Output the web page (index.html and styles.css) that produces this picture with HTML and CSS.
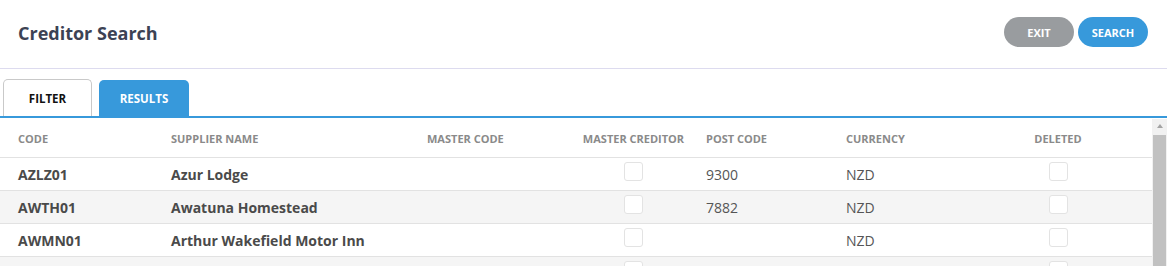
FILE: index.html
```html
<!DOCTYPE html>
<html lang="en">
<head>
    <meta charset="UTF-8">
    <title>Creditor Search</title>
    <link rel="stylesheet" href="styles.css">
</head>
<body>
    <div class="page-header">
        <h1>Creditor Search</h1>
        <div class="actions">
            <button class="btn btn-exit">EXIT</button>
            <button class="btn btn-search">SEARCH</button>
        </div>
    </div>

    <div class="tabs">
        <div class="tab">FILTER</div>
        <div class="tab tab-active">RESULTS</div>
    </div>

    <div class="results">
        <div class="grid">
            <div class="row head">
                <div class="cell">CODE</div>
                <div class="cell">SUPPLIER NAME</div>
                <div class="cell">MASTER CODE</div>
                <div class="cell center">MASTER CREDITOR</div>
                <div class="cell">POST CODE</div>
                <div class="cell">CURRENCY</div>
                <div class="cell center last">DELETED</div>
            </div>
            <div class="row">
                <div class="cell strong">AZLZ01</div>
                <div class="cell strong">Azur Lodge</div>
                <div class="cell"></div>
                <div class="cell center"><span class="check"></span></div>
                <div class="cell">9300</div>
                <div class="cell">NZD</div>
                <div class="cell center last"><span class="check"></span></div>
            </div>
            <div class="row">
                <div class="cell strong">AWTH01</div>
                <div class="cell strong">Awatuna Homestead</div>
                <div class="cell"></div>
                <div class="cell center"><span class="check"></span></div>
                <div class="cell">7882</div>
                <div class="cell">NZD</div>
                <div class="cell center last"><span class="check"></span></div>
            </div>
            <div class="row">
                <div class="cell strong">AWMN01</div>
                <div class="cell strong">Arthur Wakefield Motor Inn</div>
                <div class="cell"></div>
                <div class="cell center"><span class="check"></span></div>
                <div class="cell"></div>
                <div class="cell">NZD</div>
                <div class="cell center last"><span class="check"></span></div>
            </div>
            <div class="row">
                <div class="cell"></div>
                <div class="cell"></div>
                <div class="cell"></div>
                <div class="cell center"><span class="check"></span></div>
                <div class="cell"></div>
                <div class="cell"></div>
                <div class="cell center last"><span class="check"></span></div>
            </div>
        </div>

        <div class="scrollbar">
            <div class="scroll-up"></div>
            <div class="scroll-thumb"></div>
        </div>
    </div>
</body>
</html>
```

FILE: styles.css
```css
html, body {
    height: 100%;
}

body {
    font-family: 'Open Sans', 'Liberation Sans', sans-serif;
    background-color: #fff;
    margin: 0;
    padding: 0;
    color: #4a4a4a;
    overflow: hidden;
    display: flex;
    flex-direction: column;
}

.page-header {
    height: 68px;
    flex-shrink: 0;
    border-bottom: 1px solid #dddbef;
    display: flex;
    align-items: center;
    justify-content: space-between;
    padding: 0 19px 0 18px;
}

.page-header h1 {
    margin: 0 0 3px 0;
    font-size: 18px;
    font-weight: 700;
    color: #3c4254;
}

.actions {
    display: flex;
    gap: 4px;
    margin-bottom: 4px;
}

.btn {
    width: 70px;
    height: 30px;
    border: none;
    border-radius: 15px;
    color: #fff;
    font-family: inherit;
    font-size: 11px;
    font-weight: 700;
    padding: 0;
}

.btn-exit {
    background-color: #999c9f;
}

.btn-search {
    background-color: #3799db;
}

.tabs {
    height: 47px;
    flex-shrink: 0;
    display: flex;
    align-items: flex-end;
    gap: 7px;
    padding-left: 3px;
    border-bottom: 2px solid #3799db;
}

.tab {
    width: 87px;
    height: 36px;
    border: 1px solid #c9c9c9;
    border-bottom: none;
    border-radius: 5px 5px 0 0;
    display: flex;
    align-items: center;
    justify-content: center;
    font-size: 11.5px;
    font-weight: 700;
    color: #111;
}

.tab-active {
    width: 90px;
    height: 36px;
    border: none;
    background-color: #3799db;
    color: #fff;
}

.results {
    flex: 1;
    display: flex;
    min-height: 0;
}

.grid {
    flex: 1;
}

/* grey scrollbar on the right of the list */
.scrollbar {
    width: 15px;
    margin-top: 1px;
    background-color: #f1f1f1;
    display: flex;
    flex-direction: column;
}

.scroll-up {
    height: 16px;
    display: flex;
    align-items: center;
    justify-content: center;
}

.scroll-up::before {
    content: "";
    border-left: 3.5px solid transparent;
    border-right: 3.5px solid transparent;
    border-bottom: 4px solid #a3a3a3;
    margin-bottom: 3px;
}

.scroll-thumb {
    flex: 1;
    margin: 0 1px;
    background-color: #c1c1c1;
}

.row {
    display: grid;
    grid-template-columns: 153px 256px 156px 123px 140px 136px 188px;
    height: 33px;
    box-sizing: border-box;
    border-bottom: 1px solid #e2e2e2;
}

.row:nth-child(odd) {
    background-color: #f5f5f5;
}

.row.head {
    height: 40px;
    background-color: #fff;
}

.cell {
    display: flex;
    align-items: center;
    padding-left: 18px;
    font-size: 14px;
    color: #555;
}

.cell.center {
    justify-content: center;
    padding-left: 14px;
}

.cell.center.last {
    padding-left: 0;
}

.head .cell {
    font-size: 11px;
    font-weight: 700;
    color: #8a8a8a;
    padding-top: 2px;
}

.strong {
    font-weight: 700;
    color: #4a4a4a;
}

.check {
    width: 17px;
    height: 17px;
    border: 1px solid #e3e3e3;
    border-radius: 3px;
    background: #fff;
    margin-bottom: 5px;
}
```
